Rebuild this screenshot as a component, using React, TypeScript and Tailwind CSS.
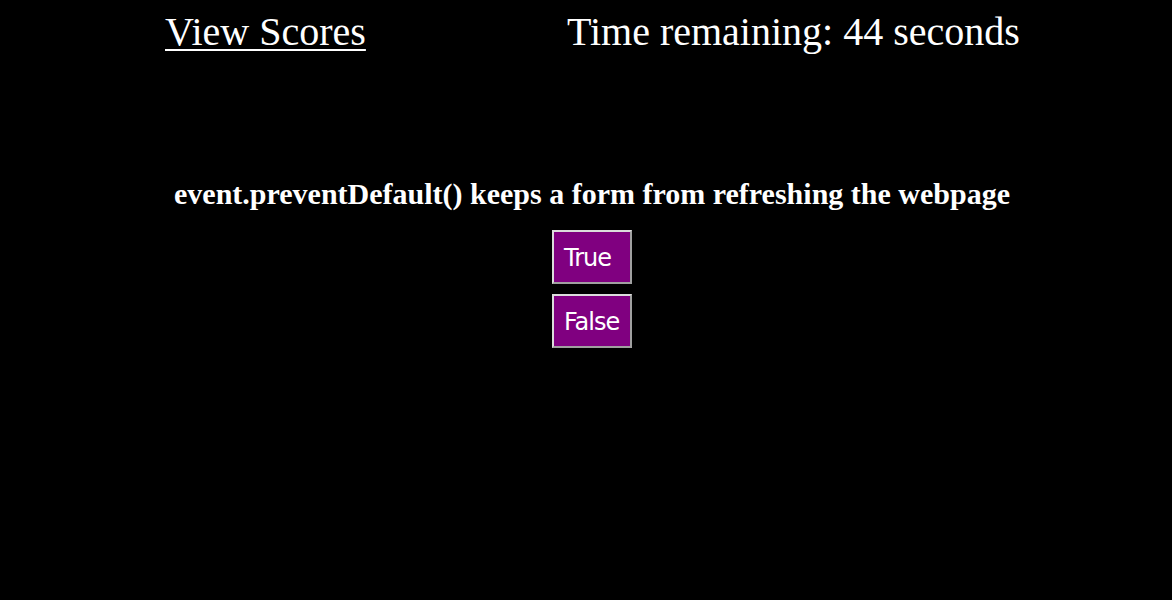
import React from 'react';

function App() {
  const answers = ['True', 'False'];

  return (
    <div className="min-h-[600px] w-full bg-black text-white font-['Liberation_Serif',serif]">
      <div className="flex items-start pl-[165px] pt-[8px] gap-[201px] text-[40px] leading-[48px]">
        <a href="#scores" className="underline underline-offset-[4px] decoration-2">View Scores</a>
        <span>Time remaining: 44 seconds</span>
      </div>

      <div className="flex flex-col items-center pt-[118px] pl-[12px]">
        <h2 className="text-[30px] font-bold leading-[40px]">
          event.preventDefault() keeps a form from refreshing the webpage
        </h2>
        <div className="flex flex-col items-center gap-[10px] mt-[16px]">
          {answers.map((answer) => (
            <button
              key={answer}
              type="button"
              className="w-[80px] h-[54px] bg-[#800080] border-2 border-t-[#dcdcdc] border-l-[#dcdcdc] border-b-[#a0a0a0] border-r-[#a0a0a0] text-[24px] text-left pl-[10px] pt-[2px] font-['DejaVu_Sans',sans-serif] tracking-[-1px]"
            >
              {answer}
            </button>
          ))}
        </div>
      </div>
    </div>
  );
}

export default App;
